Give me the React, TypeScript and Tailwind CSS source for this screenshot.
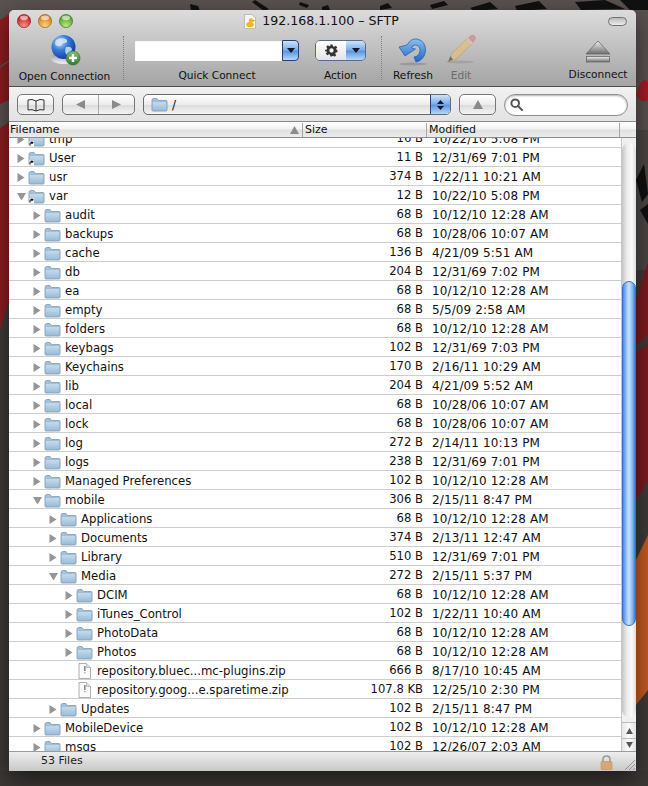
import React from "react";

type Row = { n: string; s: string; d: string; l: 0 | 1 | 2 | 3; k?: "closed" | "open" | "file"; alias?: boolean };

const rows: Row[] = [
  { n: "tmp", s: "16 B", d: "10/22/10 5:08 PM", l: 0, alias: true },
  { n: "User", s: "11 B", d: "12/31/69 7:01 PM", l: 0, alias: true },
  { n: "usr", s: "374 B", d: "1/22/11 10:21 AM", l: 0 },
  { n: "var", s: "12 B", d: "10/22/10 5:08 PM", l: 0, k: "open", alias: true },
  { n: "audit", s: "68 B", d: "10/12/10 12:28 AM", l: 1 },
  { n: "backups", s: "68 B", d: "10/28/06 10:07 AM", l: 1 },
  { n: "cache", s: "136 B", d: "4/21/09 5:51 AM", l: 1 },
  { n: "db", s: "204 B", d: "12/31/69 7:02 PM", l: 1 },
  { n: "ea", s: "68 B", d: "10/12/10 12:28 AM", l: 1 },
  { n: "empty", s: "68 B", d: "5/5/09 2:58 AM", l: 1 },
  { n: "folders", s: "68 B", d: "10/12/10 12:28 AM", l: 1 },
  { n: "keybags", s: "102 B", d: "12/31/69 7:03 PM", l: 1 },
  { n: "Keychains", s: "170 B", d: "2/16/11 10:29 AM", l: 1 },
  { n: "lib", s: "204 B", d: "4/21/09 5:52 AM", l: 1 },
  { n: "local", s: "68 B", d: "10/28/06 10:07 AM", l: 1 },
  { n: "lock", s: "68 B", d: "10/28/06 10:07 AM", l: 1 },
  { n: "log", s: "272 B", d: "2/14/11 10:13 PM", l: 1 },
  { n: "logs", s: "238 B", d: "12/31/69 7:01 PM", l: 1 },
  { n: "Managed Preferences", s: "102 B", d: "10/12/10 12:28 AM", l: 1 },
  { n: "mobile", s: "306 B", d: "2/15/11 8:47 PM", l: 1, k: "open" },
  { n: "Applications", s: "68 B", d: "10/12/10 12:28 AM", l: 2 },
  { n: "Documents", s: "374 B", d: "2/13/11 12:47 AM", l: 2 },
  { n: "Library", s: "510 B", d: "12/31/69 7:01 PM", l: 2 },
  { n: "Media", s: "272 B", d: "2/15/11 5:37 PM", l: 2, k: "open" },
  { n: "DCIM", s: "68 B", d: "10/12/10 12:28 AM", l: 3 },
  { n: "iTunes_Control", s: "102 B", d: "1/22/11 10:40 AM", l: 3 },
  { n: "PhotoData", s: "68 B", d: "10/12/10 12:28 AM", l: 3 },
  { n: "Photos", s: "68 B", d: "10/12/10 12:28 AM", l: 3 },
  { n: "repository.bluec...mc-plugins.zip", s: "666 B", d: "8/17/10 10:45 AM", l: 3, k: "file" },
  { n: "repository.goog...e.sparetime.zip", s: "107.8 KB", d: "12/25/10 2:30 PM", l: 3, k: "file" },
  { n: "Updates", s: "102 B", d: "2/15/11 8:47 PM", l: 2 },
  { n: "MobileDevice", s: "102 B", d: "10/12/10 12:28 AM", l: 1 },
  { n: "msgs", s: "102 B", d: "12/26/07 2:03 AM", l: 1 },
];

const indent = ["pl-[8px]", "pl-[24px]", "pl-[40px]", "pl-[56px]"];

function Folder({ alias }: { alias?: boolean }) {
  return (
    <svg width="17" height="15" viewBox="0 0 17 15" className="shrink-0">
      <defs>
        <linearGradient id="fb" x1="0" y1="0" x2="0" y2="1">
          <stop offset="0" stopColor="#c9deee" />
          <stop offset="1" stopColor="#98bad6" />
        </linearGradient>
      </defs>
      <path d="M1 3.5 Q1 1.5 2.5 1.5 L6 1.5 L7.5 3.5 L15 3.5 Q16 3.5 16 4.5 L16 13 Q16 14 15 14 L2 14 Q1 14 1 13 Z" fill="#a3c1d9" stroke="#7d9bb4" strokeWidth="0.8" />
      <rect x="1.4" y="4.6" width="14.2" height="9" rx="0.6" fill="url(#fb)" stroke="#8aa8c0" strokeWidth="0.5" />
      {alias && (
        <g>
          <rect x="1" y="9.5" width="5" height="5" fill="#fff" />
          <path d="M2 13.5 L2 11.6 Q2 10.8 3 10.8 L4.2 10.8 M3.4 9.8 L4.9 10.8 L3.4 11.8" fill="none" stroke="#111" strokeWidth="1.1" />
        </g>
      )}
    </svg>
  );
}

function FileIcon() {
  return (
    <svg width="13" height="16" viewBox="0 0 13 16" className="shrink-0">
      <path d="M1 0.5 L8.5 0.5 L12.5 4.5 L12.5 15.5 L1 15.5 Z" fill="#fbfbfb" stroke="#9a9a9a" strokeWidth="0.8" />
      <path d="M8.5 0.5 L8.5 4.5 L12.5 4.5" fill="#e2e2e2" stroke="#a8a8a8" strokeWidth="0.7" />
      <rect x="6" y="3" width="1.6" height="5" fill="#8a8a8a" />
      <rect x="6" y="9" width="1.6" height="1.4" fill="#b5b5b5" />
    </svg>
  );
}

function Tri({ open }: { open?: boolean }) {
  return (
    <svg width="9" height="9" viewBox="0 0 9 9" className="shrink-0">
      {open ? <path d="M0 1 L9 1 L4.5 8.5 Z" fill="#959595" /> : <path d="M0.5 0 L7.5 4.5 L0.5 9 Z" fill="#959595" />}
    </svg>
  );
}

function ListRow({ r }: { r: Row }) {
  const isFile = r.k === "file";
  return (
    <div className="flex h-[19px] shrink-0 items-center border-b border-[#cdcdcd] bg-white pt-[2px] text-[#111]">
      <div className={`flex w-[340px] shrink-0 items-center ${indent[r.l]}`}>
        <div className="flex w-[11px] shrink-0 items-center">{!isFile && <Tri open={r.k === "open"} />}</div>
        {isFile ? (
          <div className="flex w-[21px] shrink-0 pl-[2px]">
            <FileIcon />
          </div>
        ) : (
          <div className="flex w-[21px] shrink-0">
            <Folder alias={r.alias} />
          </div>
        )}
        <span className="whitespace-nowrap pt-[1px] text-[11.7px]">{r.n}</span>
      </div>
      <div className="w-[74px] shrink-0 whitespace-nowrap text-right text-[11.6px]">{r.s}</div>
      <div className="ml-[9px] whitespace-nowrap text-[12px] tracking-[0.12px]">{r.d}</div>
    </div>
  );
}

function Light({ c1, c2, c3 }: { c1: string; c2: string; c3: string }) {
  const id = "l" + c1.slice(1);
  return (
    <svg width="14" height="14" viewBox="0 0 14 14">
      <defs>
        <radialGradient id={id} cx="0.5" cy="0.85" r="0.75">
          <stop offset="0" stopColor={c1} />
          <stop offset="1" stopColor={c2} />
        </radialGradient>
      </defs>
      <circle cx="7" cy="7" r="6.6" fill={`url(#${id})`} stroke={c3} strokeWidth="0.7" />
      <ellipse cx="7" cy="3.8" rx="4" ry="2.4" fill="#fff" opacity="0.6" />
    </svg>
  );
}

function Globe() {
  return (
    <svg width="32" height="32" viewBox="0 0 32 32">
      <defs>
        <radialGradient id="gl" cx="0.35" cy="0.3" r="0.8">
          <stop offset="0" stopColor="#cfe4fb" />
          <stop offset="0.4" stopColor="#3d7fdc" />
          <stop offset="1" stopColor="#0b2f94" />
        </radialGradient>
        <linearGradient id="ba" x1="0" y1="0" x2="0" y2="1">
          <stop offset="0" stopColor="#8a8a8a" />
          <stop offset="1" stopColor="#f2f2f2" />
        </linearGradient>
        <linearGradient id="pl" x1="0" y1="0" x2="0" y2="1">
          <stop offset="0" stopColor="#7fc36a" />
          <stop offset="1" stopColor="#2f7d2c" />
        </linearGradient>
      </defs>
      <ellipse cx="14" cy="24" rx="12" ry="6" fill="url(#ba)" />
      <circle cx="14.5" cy="13" r="12" fill="url(#gl)" />
      <path d="M7 6 Q12 3 17 5 Q20 8 16 9 Q13 9 12 12 Q8 13 6 10 Z M17 13 Q22 12 23 15 Q22 20 18 21 Q15 18 17 13 Z" fill="#dbe9f7" opacity="0.8" />
      <circle cx="24" cy="24" r="7" fill="url(#pl)" stroke="#3a5f36" strokeWidth="0.6" />
      <path d="M24 20 V28 M20 24 H28" stroke="#fff" strokeWidth="2.4" />
    </svg>
  );
}

function Refresh() {
  return (
    <svg width="32" height="30" viewBox="0 0 32 30">
      <defs>
        <linearGradient id="rf" x1="0" y1="0" x2="0" y2="1">
          <stop offset="0" stopColor="#8cc0ee" />
          <stop offset="1" stopColor="#1f66c4" />
        </linearGradient>
      </defs>
      <ellipse cx="16" cy="28" rx="14" ry="1.4" fill="#777" opacity="0.45" />
      <path d="M10 9 Q14 2 20 3 Q29 5 28.5 15 Q27.5 24 19 26 L17 21 Q22.5 20 23 14.5 Q23 9.5 18.5 9 Q15.5 9 14.5 12 L18.5 13 L8 20 L2 11 Z" fill="url(#rf)" stroke="#1d5ba8" strokeWidth="0.7" />
    </svg>
  );
}

function Pencil() {
  return (
    <svg width="32" height="32" viewBox="0 0 32 32" opacity="0.72">
      <ellipse cx="15" cy="29" rx="14" ry="1.4" fill="#777" opacity="0.4" />
      <path d="M7 20 L23 5 L28 10 L11 26 L3 29 Z" fill="#e3bc82" stroke="#a98a5c" strokeWidth="0.5" />
      <path d="M3 29 L5.5 23 L8 26.5 Z" fill="#555" />
      <path d="M23 5 L26 2 Q28 1 30 3 Q31.5 5 30.5 6.5 L28 10 Z" fill="#d9828a" />
      <path d="M21.5 6.5 L23 5 L28 10 L26.5 11.5 Z" fill="#c9c9c9" />
    </svg>
  );
}

function Eject() {
  return (
    <svg width="28" height="24" viewBox="0 0 28 24">
      <defs>
        <linearGradient id="ej" x1="0" y1="0" x2="0" y2="1">
          <stop offset="0" stopColor="#f3f3f3" />
          <stop offset="1" stopColor="#6e6e6e" />
        </linearGradient>
      </defs>
      <path d="M14 1 L26 14 L2 14 Z" fill="url(#ej)" stroke="#666" strokeWidth="0.8" />
      <rect x="2.5" y="16.5" width="23" height="5.5" fill="url(#ej)" stroke="#666" strokeWidth="0.8" />
    </svg>
  );
}

function Caret() {
  return (
    <svg width="8" height="5" viewBox="0 0 8 5">
      <path d="M0 0 H8 L4 5 Z" fill="#10182a" />
    </svg>
  );
}

const blue = "bg-[linear-gradient(#cfe3f8_0%,#7eb0ea_45%,#5d97e2_55%,#b6d8f8_100%)]";
const gloss = "bg-[linear-gradient(#fff_0%,#ececec_50%,#dcdcdc_55%,#f4f4f4_100%)]";

function Dots() {
  return <div className="h-[44px] w-0 border-l border-dotted border-[#808080]" />;
}

function Gear() {
  return (
    <svg width="13" height="13" viewBox="0 0 24 24">
      <path
        fill="#333"
        d="M10 1h4l.7 3.2 2.2.9 2.8-1.8 2.8 2.8-1.8 2.8.9 2.2L23 11v4l-3.2.7-.9 2.2 1.8 2.8-2.8 2.8-2.8-1.8-2.2.9L12.9 23H10l-.7-3.2-2.2-.9-2.8 1.8-2.8-2.8 1.8-2.8-.9-2.2L0 14v-3l3.2-.7.9-2.2L2.3 5.3l2.8-2.8 2.8 1.8 2.2-.9zM12 8a4 4 0 1 0 0 8 4 4 0 0 0 0-8z"
      />
    </svg>
  );
}

export default function App() {
  return (
    <div className="relative h-[786px] w-[648px] overflow-hidden bg-[#3f3b39] font-['DejaVu_Sans','Liberation_Sans',sans-serif]">
      {/* desktop picture */}
      <svg className="absolute inset-0" width="648" height="786" viewBox="0 0 648 786">
        <rect width="648" height="130" fill="#5a5250" />
        <rect y="130" x="636" width="12" height="140" fill="#4d4744" />
        <path d="M0 20 L9 14 L9 60 L0 66 Z M0 68 L9 62 L9 100 L0 104 Z M0 128 L9 122 L9 300 L0 330 Z" fill="#8e1d20" />
        <path d="M636 95 Q642 74 648 82 L648 100 Q642 104 636 95 Z" fill="#a51c22" />
        <path d="M636 300 L648 262 L648 335 L636 345 Z M636 352 L648 344 L648 480 L636 500 Z" fill="#7f1a1e" />
        <path d="M636 560 L648 535 L648 690 L636 705 Z" fill="#c65b21" />
        <path d="M636 180 l8 -16 l4 30 l-6 8 Z M640 210 l8 -6 l0 20 Z" fill="#111" />
        <g fill="#111">
          <path d="M190 4 l8 2 l2 5 l-9 0 Z M255 0 l14 9 l-5 2 l-12 -9 Z M322 7 l6 -2 l2 5 l-8 1 Z M380 6 l8 -3 l4 5 l-12 2 Z M430 5 l14 -4 l4 4 l-16 4 Z M470 8 l20 -6 l8 7 l-24 2 Z M515 6 l24 -5 l8 8 l-30 2 Z M575 2 l30 -2 l20 9 l-44 1 Z M620 0 h28 v10 h-18 Z M300 2 l9 3 l-2 3 l-8 -3 Z" />
        </g>
        <rect y="771" width="648" height="15" fill="#3c3836" />
      </svg>

      <div className="relative flex h-[761px] w-[627px] translate-x-[9px] translate-y-[10px] flex-col overflow-hidden rounded-t-[5px] shadow-[0_8px_24px_rgba(0,0,0,0.55)]">
        {/* title + toolbar */}
        <div className="flex h-[77px] shrink-0 flex-col border-b border-[#4e4e4e] bg-[linear-gradient(#dcdcdc,#a4a4a4)]">
          <div className="relative flex h-[23px] shrink-0 items-center justify-center">
            <div className="absolute left-[8px] top-[4px] flex gap-[7px]">
              <Light c1="#ff8c8c" c2="#c01818" c3="#8a2a2a" />
              <Light c1="#ffd27a" c2="#d17a12" c3="#96662a" />
              <Light c1="#b5e97e" c2="#4d9a22" c3="#4d7a30" />
            </div>
            <div className="absolute right-[9px] top-[7px] h-[9px] w-[19px] rounded-full border border-[#707070] bg-[linear-gradient(#bbb,#ececec)]" />
            <div className="flex items-center gap-[6px] pr-[2px]">
              <svg width="12" height="15" viewBox="0 0 12 15">
                <path d="M0.5 0.5 H8 L11.5 4 V14.5 H0.5 Z" fill="#f7f7f0" stroke="#aaa" strokeWidth="0.7" />
                <circle cx="7" cy="6.5" r="2.2" fill="#f0b820" />
                <ellipse cx="6" cy="10.5" rx="3.8" ry="2.6" fill="#f0b820" />
                <path d="M9 6 L11 6.8 L9 7.6 Z" fill="#d9651b" />
              </svg>
              <span className="whitespace-nowrap text-[12.6px] text-[#111]">192.168.1.100 – SFTP</span>
            </div>
          </div>
          <div className="flex h-[53px] items-start text-[10.6px] text-[#111]">
            <div className="flex w-[110px] shrink-0 flex-col items-center pl-[1px] pt-[1px]">
              <Globe />
              <span className="mt-[3px] whitespace-nowrap">Open Connection</span>
            </div>
            <div className="ml-[4px] mt-[3px]">
              <Dots />
            </div>
            <div className="ml-[11px] flex w-[164px] shrink-0 flex-col items-center pt-[7px]">
              <div className="flex h-[21px] w-full">
                <div className="flex-1 bg-white shadow-[inset_0_1px_1px_rgba(0,0,0,0.25)]" />
                <div className={`flex w-[17px] items-center justify-center rounded-r-[4px] border border-[#27407c] ${blue}`}>
                  <Caret />
                </div>
              </div>
              <span className="mt-[7px] whitespace-nowrap">Quick Connect</span>
            </div>
            <div className="ml-[16px] flex w-[51px] shrink-0 flex-col items-center pt-[7px]">
              <div className="flex h-[21px] w-full overflow-hidden rounded-[5px] border border-[#5b6a8a]">
                <div className="flex w-[30px] items-center justify-center bg-[linear-gradient(#fff,#e4e4e4)]">
                  <Gear />
                </div>
                <div className={`flex flex-1 items-center justify-center ${blue}`}>
                  <Caret />
                </div>
              </div>
              <span className="mt-[7px] whitespace-nowrap">Action</span>
            </div>
            <div className="ml-[15px] mt-[3px]">
              <Dots />
            </div>
            <div className="ml-[5px] flex w-[52px] shrink-0 flex-col items-center pt-[3px]">
              <Refresh />
              <span className="mt-[2px] whitespace-nowrap">Refresh</span>
            </div>
            <div className="flex w-[44px] shrink-0 flex-col items-center">
              <Pencil />
              <span className="mt-[3px] whitespace-nowrap text-[#6b6b6b]">Edit</span>
            </div>
            <div className="ml-[83px] flex w-[64px] shrink-0 flex-col items-center pt-[7px]">
              <Eject />
              <span className="mt-[3px] whitespace-nowrap">Disconnect</span>
            </div>
          </div>
        </div>

        {/* nav bar */}
        <div className="flex h-[35px] shrink-0 items-center border-b border-[#8a8a8a] bg-[linear-gradient(#f1f1f1,#e2e2e2)] pl-[8px] pt-[1px]">
          <div className={`flex h-[21px] w-[37px] items-center justify-center rounded-[5px] border border-[#777] ${gloss}`}>
            <svg width="18" height="14" viewBox="0 0 18 14" fill="none" stroke="#333" strokeWidth="1">
              <path d="M9 3 Q5 0.5 1 2 V12 Q5 10.8 9 13 Q13 10.8 17 12 V2 Q13 0.5 9 3 Z M9 3 V13" />
            </svg>
          </div>
          <div className={`ml-[8px] flex h-[21px] w-[73px] overflow-hidden rounded-[5px] border border-[#777] ${gloss}`}>
            <div className="flex flex-1 items-center justify-center border-r border-[#aaa]">
              <svg width="9" height="9" viewBox="0 0 9 9"><path d="M9 0 V9 L0 4.5 Z" fill="#8a8a8a" /></svg>
            </div>
            <div className="flex flex-1 items-center justify-center">
              <svg width="9" height="9" viewBox="0 0 9 9"><path d="M0 0 V9 L9 4.5 Z" fill="#8a8a8a" /></svg>
            </div>
          </div>
          <div className={`ml-[8px] flex h-[21px] w-[308px] overflow-hidden rounded-[5px] border border-[#6a6a6a] ${gloss}`}>
            <div className="flex flex-1 items-center gap-[4px] pl-[7px] text-[12px] text-[#111]">
              <Folder />
              <span>/</span>
            </div>
            <div className={`flex w-[20px] flex-col items-center justify-center gap-[2px] border-l border-[#27407c] ${blue}`}>
              <svg width="7" height="4" viewBox="0 0 7 4"><path d="M0 4 H7 L3.5 0 Z" fill="#10182a" /></svg>
              <svg width="7" height="4" viewBox="0 0 7 4"><path d="M0 0 H7 L3.5 4 Z" fill="#10182a" /></svg>
            </div>
          </div>
          <div className={`ml-[8px] flex h-[21px] w-[37px] items-center justify-center rounded-[5px] border border-[#777] ${gloss}`}>
            <svg width="10" height="9" viewBox="0 0 10 9"><path d="M5 0 L10 9 H0 Z" fill="#8a8a8a" /></svg>
          </div>
          <div className="ml-[8px] flex h-[22px] w-[124px] items-center rounded-full border border-[#8f8f8f] bg-white pl-[5px] shadow-[inset_0_1px_2px_rgba(0,0,0,0.3)]">
            <svg width="13" height="13" viewBox="0 0 13 13" fill="none" stroke="#555" strokeWidth="2">
              <circle cx="5.2" cy="5.2" r="3.8" />
              <path d="M8 8 L12 12" strokeLinecap="round" />
            </svg>
          </div>
        </div>

        {/* column header */}
        <div className="flex h-[16px] shrink-0 items-center border-b border-[#8c8c8c] bg-[linear-gradient(#ffffff,#f4f4f4_45%,#e0e0e0_55%,#ececec)] pt-[1px] text-[11px] text-[#111]">
          <div className="flex h-full w-[294px] shrink-0 items-center justify-between border-r border-[#a6a6a6] pl-[1px] pr-[3px]">
            <span>Filename</span>
            <svg width="9" height="8" viewBox="0 0 9 8"><path d="M4.5 0 L9 8 H0 Z" fill="#8c8c8c" /></svg>
          </div>
          <div className="flex h-full w-[124px] shrink-0 items-center border-r border-[#a6a6a6] pl-[2px]">Size</div>
          <div className="flex h-full w-[193px] shrink-0 items-center border-r border-[#a6a6a6] pl-[2px]">Modified</div>
          <div className="flex-1" />
        </div>

        {/* list + scrollbar */}
        <div className="flex min-h-0 flex-1">
          <div className="flex min-w-0 flex-1 flex-col overflow-hidden bg-white">
            <div className="-mt-[9px] flex flex-col">
              {rows.map((r) => (
                <ListRow key={r.n} r={r} />
              ))}
            </div>
          </div>
          <div className="flex w-[15px] shrink-0 flex-col border-l border-[#c4c4c4] bg-[#f0f0f0]">
            <div className="mb-[5px] mt-[5px] flex min-h-0 flex-1 flex-col overflow-hidden rounded-b-[7px] rounded-t-[7px] bg-[linear-gradient(90deg,#c4c4c4,#ededed_35%,#fafafa_70%,#dcdcdc)]">
              <div className="mt-[138px] h-[345px] shrink-0 rounded-full border border-[#3a6fc0] bg-[linear-gradient(90deg,#4a88e2,#a6cdf6_35%,#c8e2fb_50%,#7fb2ee_80%,#3d7cd8)]" />
            </div>
            <div className="flex h-[16px] shrink-0 items-center justify-center border-t border-[#bbb] bg-[linear-gradient(90deg,#e6e6e6,#fbfbfb,#e0e0e0)]">
              <svg width="7" height="6" viewBox="0 0 8 7"><path d="M4 0 L8 7 H0 Z" fill="#555" /></svg>
            </div>
            <div className="flex h-[13px] shrink-0 items-center justify-center border-t border-[#bbb] bg-[linear-gradient(90deg,#e6e6e6,#fbfbfb,#e0e0e0)]">
              <svg width="7" height="6" viewBox="0 0 8 7"><path d="M0 0 H8 L4 7 Z" fill="#555" /></svg>
            </div>
          </div>
        </div>

        {/* status bar */}
        <div className="relative flex h-[20px] shrink-0 items-center border-t border-[#9c9c9c] bg-[linear-gradient(#ededed,#c8c8c8)] pl-[32px] text-[11px] text-[#222]">
          <span>53 Files</span>
          <svg className="absolute right-[23px] top-[3px]" width="13" height="15" viewBox="0 0 13 15">
            <path d="M3 7 V4.5 Q3 1 6.5 1 Q10 1 10 4.5 V7" fill="none" stroke="#9a9a9a" strokeWidth="1.6" />
            <rect x="1" y="6.5" width="11" height="8" rx="1" fill="#d9a670" stroke="#b98a58" strokeWidth="0.5" />
          </svg>
          <svg className="absolute bottom-0 right-0" width="12" height="12" viewBox="0 0 12 12" stroke="#8e8e8e" strokeWidth="0.9">
            <path d="M1 11 L11 1 M5 11 L11 5 M9 11 L11 9" />
          </svg>
        </div>
      </div>
    </div>
  );
}
